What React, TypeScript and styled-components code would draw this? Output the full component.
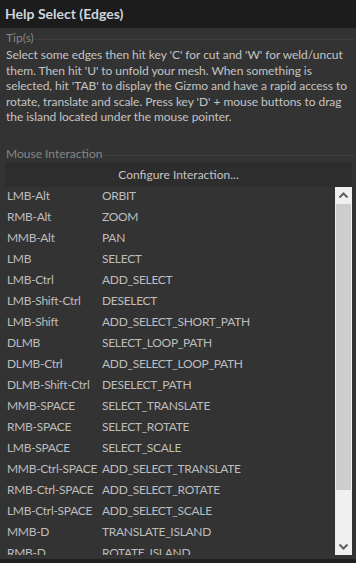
import React from "react";
import styled, { createGlobalStyle } from "styled-components";

const Global = createGlobalStyle`
  html, body { margin: 0; padding: 0; background: #333333; }
  body { width: 356px; height: 563px; overflow: hidden; font-family: "Lato", "Noto Sans", sans-serif; }
`;

const Window = styled.div`
  width: 356px;
  height: 563px;
  display: flex;
  flex-direction: column;
  background: #333333;
`;

const TitleBar = styled.div`
  height: 28px;
  flex: none;
  background: #1c1c1c;
  color: #cdd5dc;
  font-weight: 700;
  font-size: 14px;
  display: flex;
  align-items: center;
  padding-left: 5px;
  box-sizing: border-box;
  padding-bottom: 2px;
`;

const Section = styled.div`
  display: flex;
  flex-direction: column;
  padding: 0 2px 0 6px;
`;

const SectionHeader = styled.div<{ $h: number }>`
  display: flex;
  align-items: center;
  gap: 1px;
  color: #868686;
  font-size: 12px;
  height: ${(p) => p.$h}px;
  white-space: nowrap;
`;

const HeaderLine = styled.div<{ $offset: number }>`
  flex: 1;
  height: 1px;
  background: #404040;
  margin-top: ${(p) => p.$offset}px;
`;

const TipText = styled.div`
  color: #c4c4c4;
  font-size: 12px;
  line-height: 15.5px;
  padding-top: 1px;
  letter-spacing: -0.05px;
`;

const TipLine = styled.div`
  white-space: nowrap;
`;

const Spacer = styled.div<{ $h: number }>`
  height: ${(p) => p.$h}px;
  flex: none;
`;

const ConfigureButton = styled.div`
  margin: 0 4px 0 5px;
  height: 25px;
  flex: none;
  background: #2d2d2d;
  color: #c4c4c4;
  font-size: 12px;
  display: flex;
  align-items: center;
  justify-content: center;
`;

const TableArea = styled.div`
  flex: 1;
  display: flex;
  margin: 0 4px 4px 5px;
  overflow: hidden;
  min-height: 0;
`;

const Rows = styled.div`
  flex: 1;
  overflow: hidden;
`;

const Row = styled.div`
  height: 21px;
  display: grid;
  grid-template-columns: 95px 1fr;
  align-items: start;
  line-height: 18px;
  color: #bdbdbd;
  font-size: 12px;
  letter-spacing: -0.3px;
  padding-left: 2px;
  white-space: nowrap;
`;

const ScrollBar = styled.div`
  width: 17px;
  flex: none;
  background: #f0f0f0;
  display: flex;
  flex-direction: column;
`;

const ScrollButton = styled.div`
  height: 17px;
  display: flex;
  align-items: center;
  justify-content: center;
  flex: none;
`;

const Track = styled.div`
  flex: 1;
  display: flex;
  flex-direction: column;
`;

const Thumb = styled.div`
  margin: 0 1px;
  background: #cdcdcd;
  height: 286px;
  flex: none;
`;

const BottomStrip = styled.div`
  height: 4px;
  background: #1f1f1f;
  flex: none;
`;

const tipLines = [
  "Select some edges then hit key 'C' for cut and 'W' for weld/uncut",
  "them. Then hit 'U' to unfold your mesh. When something is",
  "selected, hit 'TAB' to display the Gizmo and have a rapid access to",
  "rotate, translate and scale. Press key 'D' + mouse buttons to drag",
  "the island located under the mouse pointer.",
];

const rows: [string, string][] = [
  ["LMB-Alt", "ORBIT"],
  ["RMB-Alt", "ZOOM"],
  ["MMB-Alt", "PAN"],
  ["LMB", "SELECT"],
  ["LMB-Ctrl", "ADD_SELECT"],
  ["LMB-Shift-Ctrl", "DESELECT"],
  ["LMB-Shift", "ADD_SELECT_SHORT_PATH"],
  ["DLMB", "SELECT_LOOP_PATH"],
  ["DLMB-Ctrl", "ADD_SELECT_LOOP_PATH"],
  ["DLMB-Shift-Ctrl", "DESELECT_PATH"],
  ["MMB-SPACE", "SELECT_TRANSLATE"],
  ["RMB-SPACE", "SELECT_ROTATE"],
  ["LMB-SPACE", "SELECT_SCALE"],
  ["MMB-Ctrl-SPACE", "ADD_SELECT_TRANSLATE"],
  ["RMB-Ctrl-SPACE", "ADD_SELECT_ROTATE"],
  ["LMB-Ctrl-SPACE", "ADD_SELECT_SCALE"],
  ["MMB-D", "TRANSLATE_ISLAND"],
  ["RMB-D", "ROTATE_ISLAND"],
];

const Chevron = ({ up }: { up: boolean }) => (
  <svg width="9" height="6" viewBox="0 0 9 6">
    <path
      d={up ? "M0.5 5.5 L4.5 1.5 L8.5 5.5" : "M0.5 0.5 L4.5 4.5 L8.5 0.5"}
      fill="none"
      stroke="#606060"
      strokeWidth="2"
    />
  </svg>
);

export default function App() {
  return (
    <>
      <Global />
      <Window>
        <TitleBar>Help Select (Edges)</TitleBar>
        <Section>
          <SectionHeader $h={18}>
            Tip(s)
            <HeaderLine $offset={4} />
          </SectionHeader>
          <TipText>
            {tipLines.map((l) => (
              <TipLine key={l}>{l}</TipLine>
            ))}
          </TipText>
        </Section>
        <Spacer $h={20} />
        <Section>
          <SectionHeader $h={17}>
            Mouse Interaction
            <HeaderLine $offset={5} />
          </SectionHeader>
        </Section>
        <ConfigureButton>Configure Interaction...</ConfigureButton>
        <TableArea>
          <Rows>
            {rows.map(([k, v]) => (
              <Row key={k}>
                <span>{k}</span>
                <span>{v}</span>
              </Row>
            ))}
          </Rows>
          <ScrollBar>
            <ScrollButton>
              <Chevron up />
            </ScrollButton>
            <Track>
              <Thumb />
            </Track>
            <ScrollButton>
              <Chevron up={false} />
            </ScrollButton>
          </ScrollBar>
        </TableArea>
        <BottomStrip />
      </Window>
    </>
  );
}
